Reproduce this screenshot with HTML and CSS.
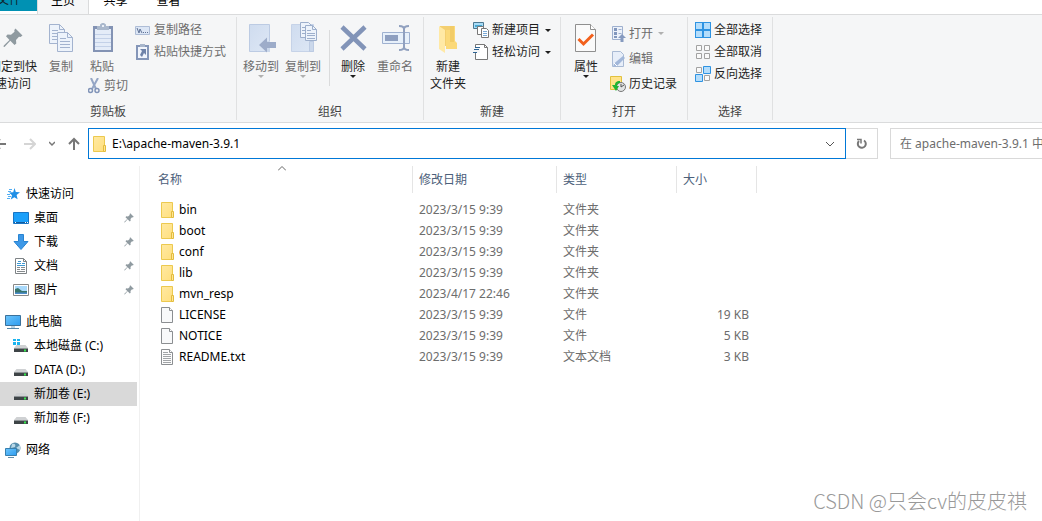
FILE: index.html
```html
<!DOCTYPE html>
<html lang="zh-CN">
<head>
<meta charset="utf-8">
<title>apache-maven-3.9.1</title>
<link rel="stylesheet" href="styles.css">
</head>
<body>
<svg class="defs" aria-hidden="true">
  <defs>
    <linearGradient id="g-folder" x1="0" y1="0" x2="1" y2="1"><stop offset="0" stop-color="#ffe9a2"/><stop offset="1" stop-color="#ffdf7e"/></linearGradient>
    <linearGradient id="g-blue" x1="0" y1="0" x2="1" y2="1"><stop offset="0" stop-color="#6cc4fa"/><stop offset="1" stop-color="#2d9cf0"/></linearGradient>
    <linearGradient id="g-pale" x1="0" y1="0" x2="1" y2="1"><stop offset="0" stop-color="#cfdcef"/><stop offset="1" stop-color="#dde7f5"/></linearGradient>
    <symbol id="folder" viewBox="0 0 14 16"><path d="M.5.5h11v15H.5z" fill="url(#g-folder)" stroke="#ecc94f"/><path d="M10.500 9.500h2v6h-2z" fill="#ffe694" stroke="#e3bc3e"/></symbol>
    <symbol id="file" viewBox="0 0 14 16"><path d="M.5.5h8l3 3v12H.5z" fill="#f8f9fa" stroke="#8b8e91"/><path d="M8.500.5v3h3" fill="#fff" stroke="#8b8e91"/></symbol>
    <symbol id="text" viewBox="0 0 14 16"><path d="M.5.5h8l3 3v12H.5z" fill="#fcfcfc" stroke="#8b8e91"/><path d="M8.500.5v3h3" fill="#fff" stroke="#8b8e91"/><path d="M2 3.500h5M2 5.500h8M2 7.500h8M2 9.500h8M2 11.500h8M2 13.500h8" stroke="#a1a4a7"/></symbol>
    <symbol id="pin" viewBox="0 0 20 20"><path d="M12.500 .5l7 7-2 1.500-1.500-.3-3 3.300.3 3.500-1.800 1.500-4.200-4.300L1.500 19 .5 18.700.8 17.500 6.500 12 3 8.300l1.500-1.800 3.500.3 3.500-3-.2-1.700z" fill="#8f9aa0"/></symbol>
    <symbol id="disk" viewBox="0 0 14 9"><path d="M2.500 1h9L14 4H0z" fill="#cfd1d3"/><path d="M0 4h14v4H0z" fill="#3e4447"/><path d="M0 4h14v1H0z" fill="#8d9295"/><path d="M10 5.500h2v2h-2z" fill="#35e94c"/></symbol>
    <symbol id="more" viewBox="0 0 6 3"><path d="M0 0h6L3 3z" fill="currentColor"/></symbol>
  </defs>
</svg>
<div class="window">
  <nav class="tabs" aria-label="功能区选项卡">
    <button class="tab tab-file">文件</button>
    <button class="tab tab-active">主页</button>
    <button class="tab">共享</button>
    <button class="tab">查看</button>
  </nav>

  <div class="ribbon">
    <section class="group group-clipboard">
      <div class="tools">
        <button class="big big-pin">
          <svg class="art" viewBox="0 0 32 32"><g transform="translate(6 6)"><use href="#pin" width="20" height="20"/></g></svg>
          <span>固定到快<br>速访问</span>
        </button>
        <button class="big big-copy off">
          <svg class="art" viewBox="0 0 32 32"><g fill="#edf3fb" stroke="#a3b3cf"><path d="M4.500 2.500h10l5 5v14h-15z"/><path d="M14.500 2.500v5h5M7 8.500h6M7 11.500h9M7 14.500h9M7 17.500h9" fill="none"/><path d="M12.500 10.500h10l5 5v14h-15z"/><path d="M22.500 10.500v5h5M15 16.500h6M15 19.500h10M15 22.500h10M15 25.500h10" fill="none"/></g></svg>
          <span>复制</span>
        </button>
        <div class="stack">
          <button class="big big-paste off">
            <svg class="art" viewBox="0 0 32 32"><path d="M7 4h20v26H7z" fill="#8393b4"/><path d="M9 7h16v21H9z" fill="#e4ecf8"/><path d="M9 12.500h16M9 16.500h16M9 20.500h16M9 24.500h16" stroke="#c3d1e8"/><path d="M11 4h3V2.500L16 1h2l2 1.500V4h3v4H11z" fill="#aab8cc"/><path d="M16 3h2v2h-2z" fill="#e9eef6"/></svg>
            <span>粘贴</span>
          </button>
          <button class="small cut off">
            <svg class="glyph" viewBox="0 0 16 16"><path d="M3 0l5 11M10 0L4 11" stroke="#95a6c5" stroke-width="2" fill="none"/><circle cx="2.500" cy="12.500" r="2" fill="none" stroke="#8194b8" stroke-width="1.500"/><circle cx="9" cy="12.500" r="2" fill="none" stroke="#8194b8" stroke-width="1.500"/></svg>
            <span>剪切</span>
          </button>
        </div>
        <div class="list">
          <button class="small off">
            <svg class="glyph" viewBox="0 0 16 16"><path d="M.5 4.500h14v8H.5z" fill="#dce6f5" stroke="#aebdd6"/><path d="M2 6l2 5 1-4 2 4" fill="none" stroke="#607397"/><path d="M8 10h1v1H8zM10 10h1v1h-1zM12 10h1v1h-1z" fill="#607397"/></svg>
            <span>复制路径</span>
          </button>
          <button class="small off">
            <svg class="glyph" viewBox="0 0 16 16"><path d="M2 2h11v13H2z" fill="#f1f5fc" stroke="#8496b8" stroke-width="2"/><path d="M5 0h5v3H5z" fill="#a8b6cb"/><path d="M5 5h6v6L9 9l-2 4-2-2 2-4z" fill="#6f83a9"/></svg>
            <span>粘贴快捷方式</span>
          </button>
        </div>
      </div>
      <h2>剪贴板</h2>
    </section>

    <section class="group group-organize">
      <div class="tools">
        <button class="big off">
          <svg class="art" viewBox="0 0 32 32"><path d="M4.500 2.500h20v27h-20z" fill="url(#g-pale)" stroke="#bccbe3"/><path d="M21 19h4v11h-4z" fill="#cbd8eb"/><path d="M14 23l8-7.500V20h9v6h-9v4.500z" fill="#9dacc9"/></svg>
          <span>移动到</span><svg class="more" viewBox="0 0 6 3"><use href="#more"/></svg>
        </button>
        <button class="big off">
          <svg class="art" viewBox="0 0 32 32"><path d="M4.500 2.500h22v27h-22z" fill="url(#g-pale)" stroke="#c6d3e8"/><path d="M22.500 19.500h4v10h-4z" fill="#cbd8eb" stroke="#bccbe3"/><g fill="#edf3fb" stroke="#9dafcc"><path d="M13.500.5h8l3 3v12h-11z"/><path d="M15 5.500h5M15 8.500h5M15 11.500h5" fill="none"/><path d="M18.500 3.500h7l4 4v11h-11z"/><path d="M25.500 3.500v4h4M20 8.500h4M20 11.500h8M20 13.500h8M20 16.500h8" fill="none"/></g></svg>
          <span>复制到</span><svg class="more" viewBox="0 0 6 3"><use href="#more"/></svg>
        </button>
        <span class="divider"></span>
        <button class="big">
          <svg class="art" viewBox="0 0 32 32"><path d="M5 5l23 22M28 5L5 27" stroke="#8294b8" stroke-width="4.500" fill="none"/></svg>
          <span>删除</span><svg class="more" viewBox="0 0 6 3"><use href="#more"/></svg>
        </button>
        <button class="big off">
          <svg class="art" viewBox="0 0 32 32"><path d="M3.500 10.500h27v11h-27z" fill="#e7f0fa" stroke="#9fb1d0"/><path d="M6 13h13v6H6z" fill="#8e9fc0"/><path d="M20 4c3 0 5 1 5 3v18c0 2-2 3-5 3M30 4c-3 0-5 1-5 3v18c0 2 2 3 5 3" fill="none" stroke="#90a0bf" stroke-width="2"/></svg>
          <span>重命名</span>
        </button>
      </div>
      <h2>组织</h2>
    </section>

    <section class="group group-new">
      <div class="tools">
        <button class="big">
          <svg class="art" viewBox="0 0 32 32"><path d="M8 4h15v20H8z" fill="#f4cf70"/><path d="M14 8h6V4h3v15l2 2v6H14z" fill="#fbd979"/><path d="M7 4l6 4v23l-6-4z" fill="#ffe9a5"/><path d="M18 4h4v16h-4z" fill="#f2cc68"/></svg>
          <span>新建<br>文件夹</span>
        </button>
        <div class="list">
          <button class="small">
            <svg class="glyph" viewBox="0 0 16 16"><path d="M.5.5h10v6H.5z" fill="#a9dcf7" stroke="#4c7992"/><path d="M2 3h7v2H2z" fill="#47a8d3"/><path d="M4.500 4.500h6v8h-6z" fill="#fff" stroke="#777"/><path d="M8.500 6.500h5l2 2v7h-7z" fill="#fff" stroke="#777"/><path d="M10 9.500h4M10 11.500h4M10 13.500h4" stroke="#79a9d5"/></svg>
            <span>新建项目</span><svg class="more" viewBox="0 0 6 3"><use href="#more"/></svg>
          </button>
          <button class="small">
            <svg class="glyph" viewBox="0 0 16 16"><path d="M2.500.5h9l3 3v12h-12z" fill="#fff" stroke="#777"/><path d="M11.500.5v3h3" fill="none" stroke="#777"/><path d="M0 3h7v6H0z" fill="#f5f6f7"/><path d="M2 3.500h5M1 5.500h5M0 8.500h4" stroke="#2e6493"/></svg>
            <span>轻松访问</span><svg class="more" viewBox="0 0 6 3"><use href="#more"/></svg>
          </button>
        </div>
      </div>
      <h2>新建</h2>
    </section>

    <section class="group group-open">
      <div class="tools">
        <button class="big">
          <svg class="art" viewBox="0 0 32 32"><path d="M5.500 2.500h15l5 5v22h-20z" fill="#fafafa" stroke="#8f8f8f"/><path d="M20.500 2.500v5h5" fill="#fff" stroke="#8f8f8f"/><path d="M8.500 17l5 5 9.500-9.500" fill="none" stroke="#f2601c" stroke-width="3"/></svg>
          <span>属性</span><svg class="more" viewBox="0 0 6 3"><use href="#more"/></svg>
        </button>
        <div class="list list-loose">
          <button class="small off">
            <svg class="glyph" viewBox="0 0 16 16"><path d="M2.500.5h10v13h-10z" fill="#edf2fa" stroke="#9eb0cf"/><path d="M4 2h3v3H4zM4 6h3v3H4zM4 10h3v2H4z" fill="#8297bd"/><path d="M8.500 3.500h3M8.500 7.500h3" stroke="#9eb0cf"/><path d="M12 8l4 4h-2.500v4h-3v-4H8z" fill="#869abf"/></svg>
            <span>打开</span><svg class="more" viewBox="0 0 6 3"><use href="#more"/></svg>
          </button>
          <button class="small off">
            <svg class="glyph" viewBox="0 0 16 16"><path d="M2.500.5h8l3 3v12h-11z" fill="#e7eef9" stroke="#a9bad4"/><path d="M13 5l2 2-8 8-4 1 1-3.500z" fill="#a2b7d9"/><path d="M4 12l3 3" stroke="#fff"/></svg>
            <span>编辑</span>
          </button>
          <button class="small">
            <svg class="glyph" viewBox="0 0 16 16"><path d="M.5.5h11v13H.5z" fill="#ffe38a" stroke="#e1c13e"/><circle cx="11" cy="11" r="4.500" fill="#e2e4e4" stroke="#777"/><path d="M11 8v3l3-2" fill="none" stroke="#555"/><path d="M10 5C6 5 5 7 5 9H2l4 6 3-5H7c0-2 1-3 3-3z" fill="#20b433"/></svg>
            <span>历史记录</span>
          </button>
        </div>
      </div>
      <h2>打开</h2>
    </section>

    <section class="group group-select">
      <div class="tools">
        <div class="list">
          <button class="small">
            <svg class="glyph" viewBox="0 0 16 16"><path d="M0 0h16v16H0z" fill="#2e93e2"/><path d="M1 1h6v6H1zM9 1h6v6H9zM1 9h6v6H1zM9 9h6v6H9z" fill="#b4ddfb"/></svg>
            <span>全部选择</span>
          </button>
          <button class="small">
            <svg class="glyph" viewBox="0 0 16 16"><path d="M1.500 1.500h5v5h-5zM9.500 1.500h5v5h-5zM1.500 9.500h5v5h-5zM9.500 9.500h5v5h-5z" fill="#fafafa" stroke="#a2a2a2"/></svg>
            <span>全部取消</span>
          </button>
          <button class="small">
            <svg class="glyph" viewBox="0 0 16 16"><path d="M1.500 1.500h5v5h-5zM9.500 9.500h5v5h-5z" fill="#fafafa" stroke="#a2a2a2"/><path d="M8.500.5h7v7h-7zM.5 8.500h7v7h-7z" fill="#b4ddfb" stroke="#2e93e2"/></svg>
            <span>反向选择</span>
          </button>
        </div>
      </div>
      <h2>选择</h2>
    </section>
  </div>

  <div class="navbar">
    <div class="history">
      <button aria-label="后退"><svg width="12" height="14" viewBox="0 0 12 14"><path d="M0 7h12M6 2L1 7l5 5" fill="none" stroke="#777" stroke-width="2"/></svg></button>
      <button class="forward" aria-label="前进"><svg width="12" height="14" viewBox="0 0 12 14"><path d="M0 7h11M6 2l5 5-5 5" fill="none" stroke="#d5d5d5" stroke-width="2"/></svg></button>
      <button aria-label="最近浏览的位置"><svg width="6" height="6" viewBox="0 0 6 6"><path d="M0 1l3 3 3-3" fill="none" stroke="#777" stroke-width="1.500"/></svg></button>
      <button aria-label="上移"><svg width="12" height="14" viewBox="0 0 12 14"><path d="M6 13V2M1 7l5-5 5 5" fill="none" stroke="#777" stroke-width="2"/></svg></button>
    </div>
    <div class="address">
      <svg class="mark" viewBox="0 0 14 16"><use href="#folder"/></svg>
      <input type="text" aria-label="地址" value="E:\apache-maven-3.9.1">
      <button aria-label="以前的位置"><svg width="10" height="6" viewBox="0 0 10 6"><path d="M1 1l4 4 4-4" fill="none" stroke="#555"/></svg></button>
    </div>
    <button class="refresh" aria-label="刷新"><svg width="12" height="12" viewBox="0 0 12 12"><path d="M8 2.500A4 4 0 1 1 3 3" fill="none" stroke="#777" stroke-width="2"/><path d="M1 1.500h4v4" fill="none" stroke="#777" stroke-width="1.500"/></svg></button>
    <div class="search"><input type="search" aria-label="搜索" placeholder="在 apache-maven-3.9.1 中搜索"></div>
  </div>

  <main class="content">
    <nav class="tree" aria-label="导航窗格">
      <ul>
        <li><a href="#quick"><svg class="node" viewBox="0 0 16 16"><path d="M9.500 2l1.300 4 4.200.3-3.400 2.700 1 4.200-3.300-2-3.500 2.300 1.200-4.200-3-2.800 4.200-.3z" fill="#1f8fe6"/><path d="M4 3.500h3M3 5.500h3M2 8.500h3M3 10.500h3M2 12.500h3" stroke="#53aef3"/></svg><span>快速访问</span></a></li>
        <li><a class="child" href="#desktop"><svg class="node" viewBox="0 0 16 16"><path d="M.5 2.500h15v11H.5z" fill="#1ca0fa" stroke="#1975c4"/><path d="M1 12.500h14" stroke="#125b9d"/><path d="M2 12.500h1M12 12.500h1M14 12.500h1" stroke="#fff"/></svg><span>桌面</span><svg class="pin" viewBox="0 0 20 20"><use href="#pin"/></svg></a></li>
        <li><a class="child" href="#downloads"><svg class="node" viewBox="0 0 16 16"><path d="M5.500.5h5v7h4.500L8 15.500 1 7.500h4.500z" fill="#3d98e7" stroke="#2884d2"/></svg><span>下载</span><svg class="pin" viewBox="0 0 20 20"><use href="#pin"/></svg></a></li>
        <li><a class="child" href="#documents"><svg class="node" viewBox="0 0 16 16"><path d="M2.500.5h8l3 3v12h-11z" fill="#fff" stroke="#7e8386"/><path d="M10.500.5v3h3" fill="none" stroke="#7e8386"/><path d="M5 3.500h3M4 5.500h4M9 5.500h3M4 7.500h8" stroke="#3d98d2"/><path d="M4 9.500h3M8 9.500h4M4 11.500h3M8 11.500h4M4 13.500h8" stroke="#858a8d"/></svg><span>文档</span><svg class="pin" viewBox="0 0 20 20"><use href="#pin"/></svg></a></li>
        <li><a class="child" href="#pictures"><svg class="node" viewBox="0 0 16 16"><path d="M.5 2.500h15v11H.5z" fill="#fff" stroke="#888"/><path d="M2 4h12v8H2z" fill="#a9d9fb"/><path d="M2 7l3-1 4 3h5v3H2z" fill="#38756d"/><path d="M2 10.500h12V12H2z" fill="#4c8dcc"/></svg><span>图片</span><svg class="pin" viewBox="0 0 20 20"><use href="#pin"/></svg></a></li>
      </ul>
      <ul>
        <li><a href="#pc"><svg class="node" viewBox="0 0 16 16"><path d="M.5 1.500h15v10H.5z" fill="url(#g-blue)" stroke="#3b719b"/><path d="M6 12h4v2H6z" fill="#b9d2e2"/><path d="M2 14.500h12" stroke="#5486a8"/></svg><span>此电脑</span></a></li>
        <li><a class="child" href="#c"><svg class="node" viewBox="0 0 16 16"><path d="M0 1h3v2H0zM4 1h3v2H4zM0 4h3v3H0zM4 4h3v3H4z" fill="#1ab4ef"/><use href="#disk" x="1" y="6" width="14" height="9"/></svg><span>本地磁盘 (C:)</span></a></li>
        <li><a class="child" href="#d"><svg class="node" viewBox="0 0 16 16"><use href="#disk" x="1" y="6" width="14" height="9"/></svg><span>DATA (D:)</span></a></li>
        <li><a class="child current" href="#e" aria-current="true"><svg class="node" viewBox="0 0 16 16"><use href="#disk" x="1" y="6" width="14" height="9"/></svg><span>新加卷 (E:)</span></a></li>
        <li><a class="child" href="#f"><svg class="node" viewBox="0 0 16 16"><use href="#disk" x="1" y="6" width="14" height="9"/></svg><span>新加卷 (F:)</span></a></li>
      </ul>
      <ul>
        <li><a href="#network"><svg class="node" viewBox="0 0 16 16"><circle cx="10" cy="6" r="5.500" fill="#568ead"/><path d="M7 2c3-1 4 1 3 3l-4 1zM11 6l4-3v5z" fill="#b8d8e8"/><path d="M.5 6.500h11v7H.5z" fill="url(#g-blue)" stroke="#377fae"/><path d="M3 15.500h6" stroke="#628da7"/></svg><span>网络</span></a></li>
      </ul>
    </nav>

    <section class="files">
      <table>
        <colgroup><col class="c-name"><col class="c-date"><col class="c-type"><col class="c-size"></colgroup>
        <thead>
          <tr><th aria-sort="ascending">名称<svg class="sort" viewBox="0 0 8 5"><path d="M0 4.500l4-4 4 4" fill="none" stroke="#666"/></svg></th><th>修改日期</th><th>类型</th><th>大小</th></tr>
        </thead>
        <tbody>
          <tr><td><a href="#bin"><svg class="mark" viewBox="0 0 14 16"><use href="#folder"/></svg>bin</a></td><td>2023/3/15 9:39</td><td>文件夹</td><td></td></tr>
          <tr><td><a href="#boot"><svg class="mark" viewBox="0 0 14 16"><use href="#folder"/></svg>boot</a></td><td>2023/3/15 9:39</td><td>文件夹</td><td></td></tr>
          <tr><td><a href="#conf"><svg class="mark" viewBox="0 0 14 16"><use href="#folder"/></svg>conf</a></td><td>2023/3/15 9:39</td><td>文件夹</td><td></td></tr>
          <tr><td><a href="#lib"><svg class="mark" viewBox="0 0 14 16"><use href="#folder"/></svg>lib</a></td><td>2023/3/15 9:39</td><td>文件夹</td><td></td></tr>
          <tr><td><a href="#mvn_resp"><svg class="mark" viewBox="0 0 14 16"><use href="#folder"/></svg>mvn_resp</a></td><td>2023/4/17 22:46</td><td>文件夹</td><td></td></tr>
          <tr><td><a href="#license"><svg class="mark" viewBox="0 0 14 16"><use href="#file"/></svg>LICENSE</a></td><td>2023/3/15 9:39</td><td>文件</td><td>19 KB</td></tr>
          <tr><td><a href="#notice"><svg class="mark" viewBox="0 0 14 16"><use href="#file"/></svg>NOTICE</a></td><td>2023/3/15 9:39</td><td>文件</td><td>5 KB</td></tr>
          <tr><td><a href="#readme"><svg class="mark" viewBox="0 0 14 16"><use href="#text"/></svg>README.txt</a></td><td>2023/3/15 9:39</td><td>文本文档</td><td>3 KB</td></tr>
        </tbody>
      </table>
    </section>
  </main>
  <p class="watermark">CSDN @只会cv的皮皮祺</p>
</div>
</body>
</html>
```

FILE: styles.css
```css
* { box-sizing: border-box; }

body {
  margin: 0;
  overflow-x: hidden;
  background: #fff;
  color: #000;
  font: 12px/16px "Noto Sans", "Noto Sans CJK SC", sans-serif;
}

button, input {
  margin: 0;
  padding: 0;
  border: 0;
  background: none;
  color: inherit;
  font: inherit;
}

input { outline: none; }
a { color: inherit; text-decoration: none; }
ul { margin: 0; padding: 0; list-style: none; }
svg { display: block; flex: none; }
.defs { position: absolute; width: 0; height: 0; }

.window {
  position: relative;
  display: flex;
  flex-direction: column;
  min-height: 100vh;
  overflow: hidden;
}

/* Tab strip */
.tabs {
  display: flex;
  align-items: flex-end;
  height: 14px;
  overflow: hidden;
}
.tab { flex: none; width: 53px; height: 26px; }
.tab-file {
  width: 56px;
  height: 23px;
  margin: 0 0 3px -19px;
  background: #0091b3;
  color: #10242b;
}
.tab-active {
  width: 52px;
  border: solid #dadbdc;
  border-width: 0 1px;
  background: #f5f6f7;
}

/* Ribbon */
.ribbon {
  display: flex;
  padding: 2px 0;
  border: solid #dadbdc;
  border-width: 1px 0;
  background: #f5f6f7;
  color: #1e1e1e;
}
.group {
  display: flex;
  flex: none;
  flex-direction: column;
  border-right: 1px solid #e0e1e2;
}
.group h2 {
  margin: 0;
  color: #444;
  font-size: 12px;
  font-weight: 400;
  text-align: center;
}
.group-clipboard { width: 237px; }
.group-clipboard h2 { padding-right: 20px; }
.group-organize { width: 187px; }
.group-organize .tools { padding-left: 3px; }
.group-new { width: 137px; }
.group-new .tools { padding-left: 2px; }
.group-open { width: 127px; }
.group-open .tools { padding-left: 4px; }
.group-select { width: 85px; }
.group-select .tools { padding-left: 4px; }

.tools { display: flex; height: 87px; }
.big {
  display: flex;
  flex: none;
  flex-direction: column;
  align-items: center;
  width: 42px;
  padding-top: 5px;
  line-height: 17px;
  white-space: nowrap;
}
.art { width: 32px; height: 32px; margin-bottom: 4px; }
.more { width: 6px; height: 3px; }
.off { color: #6d6d6d; }
.off .more { color: #b0b0b0; }
.big-pin { width: 50px; margin-left: -12px; }
.big-copy { width: 46px; }
.big-paste { width: 36px; }
.group-new .big { width: 44px; }
.stack { display: flex; flex: none; flex-direction: column; width: 48px; }
.divider { width: 1px; margin: 13px 2px 18px 5px; background: #dadbdc; }

.list { display: flex; flex-direction: column; padding: 2px 0 0 3px; }
.list-loose { padding-top: 4px; }
.small {
  display: flex;
  align-items: center;
  gap: 3px;
  height: 22px;
  white-space: nowrap;
}
.list-loose .small { height: 25px; }
.small .more { margin-left: 2px; }
.cut { gap: 0; padding-left: 4px; }
.glyph { width: 16px; height: 16px; }

/* Navigation bar */
.navbar { display: flex; padding: 5px 0 7px; }
.history {
  display: flex;
  flex: none;
  gap: 13px;
  width: 94px;
  margin-left: -6px;
}
.forward { margin-left: 5px; }
.address {
  display: flex;
  flex: 1;
  align-items: center;
  min-width: 0;
  height: 31px;
  padding: 0 10px 0 4px;
  border: 1px solid #0078d7;
}
.mark { width: 14px; height: 16px; }
.address input { flex: 1; min-width: 0; margin-left: 5px; }
.refresh {
  display: flex;
  flex: none;
  align-items: center;
  justify-content: center;
  width: 32px;
  margin-right: 12px;
  border: 1px solid #d9d9d9;
  border-left: 0;
}
.search {
  display: flex;
  flex: 0 0 152px;
  overflow: hidden;
  border: 1px solid #d9d9d9;
  border-right: 0;
}
.search input { flex: none; width: 200px; padding-left: 9px; }
.search input::placeholder { color: #6d6d6d; opacity: 1; }

/* Main area */
.content { display: flex; flex: 1; }
.tree {
  display: flex;
  flex: none;
  flex-direction: column;
  gap: 8px;
  width: 140px;
  padding: 16px 2px 0 0;
  border-right: 1px solid #f0f0f0;
}
.tree a {
  display: flex;
  align-items: center;
  gap: 5px;
  height: 24px;
  padding: 0 3px 0 5px;
}
.tree .child { padding-left: 13px; }
.tree .current { background: #d9d9d9; }
.node { width: 16px; height: 16px; }
.pin { width: 10px; height: 10px; margin-left: auto; }

.files { flex: 1; padding-left: 12px; }
table { border-collapse: separate; border-spacing: 0; table-layout: fixed; width: 605px; }
.c-name { width: 261px; }
.c-date { width: 144px; }
.c-type { width: 120px; }
.c-size { width: 80px; }
th {
  position: relative;
  height: 27px;
  padding: 0 6px;
  border-right: 1px solid #e5e5e5;
  color: #4c607a;
  font-weight: 400;
  text-align: left;
}
.sort {
  position: absolute;
  top: 0;
  left: 50%;
  width: 8px;
  height: 5px;
  margin-left: -4px;
}
tbody::before { content: ""; display: block; height: 6px; }
td { height: 21px; padding: 0 6px; color: #6d6d6d; }
td:first-child { padding-left: 9px; color: #000; }
td:last-child { padding-right: 8px; text-align: right; }
td a { display: flex; align-items: center; gap: 4px; }

.watermark {
  position: absolute;
  right: 15px;
  bottom: 6px;
  margin: 0;
  color: #999;
  font: 300 20px/28px "Noto Sans CJK SC", sans-serif;
}
```
